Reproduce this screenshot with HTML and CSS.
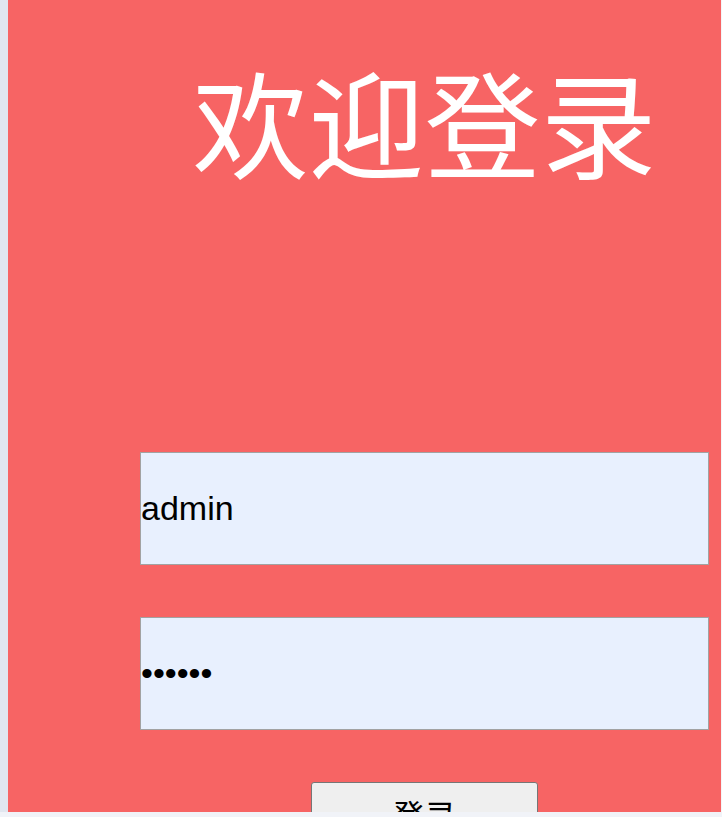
FILE: index.html
```html
<!DOCTYPE html>
<html lang="zh">
<head>
<meta charset="utf-8">
<title>欢迎登录</title>
<link rel="stylesheet" href="styles.css">
</head>
<body>
<main class="page">
  <div class="column">
    <h1 class="title">欢迎登录</h1>
    <form class="form">
      <input class="field" type="text" value="admin">
      <input class="field" type="password" value="123456">
      <button class="submit" type="button">登录</button>
    </form>
  </div>
</main>
</body>
</html>
```
FILE: styles.css
```css
html {
  background: #f1f3f8;
}
body {
  margin: 0;
  padding-left: 8px;
  background: #e1e6ef;
}
.page {
  box-sizing: border-box;
  width: 714px;
  height: 812px;
  overflow: hidden;
  background: #f76464;
  border-right: 1px solid #f4f5f7;
  padding: 0 12px 0 132px;
}
.column {
  display: flex;
  flex-direction: column;
}
.title {
  margin: 35px 0 0;
  font-family: "Noto Sans CJK SC", sans-serif;
  font-weight: 400;
  font-size: 116px;
  line-height: normal;
  color: #ffffff;
  text-align: center;
}
.form {
  margin-top: 249px;
  display: flex;
  flex-direction: column;
  gap: 52px;
}
.field {
  box-sizing: border-box;
  height: 113px;
  width: 100%;
  margin: 0;
  padding: 0;
  border: 1px solid #a2a2a2;
  background: #e8f0fe;
  font-family: "Liberation Sans", Arial, sans-serif;
  font-size: 34px;
  color: #000;
  outline: none;
}
.submit {
  align-self: center;
  box-sizing: border-box;
  width: 227px;
  height: 60px;
  padding: 8px 0;
  background: #efefef;
  border: 1px solid #767676;
  border-radius: 3px;
  font-family: "Noto Sans CJK SC", sans-serif;
  font-size: 32px;
  color: #000;
  line-height: normal;
}
```
